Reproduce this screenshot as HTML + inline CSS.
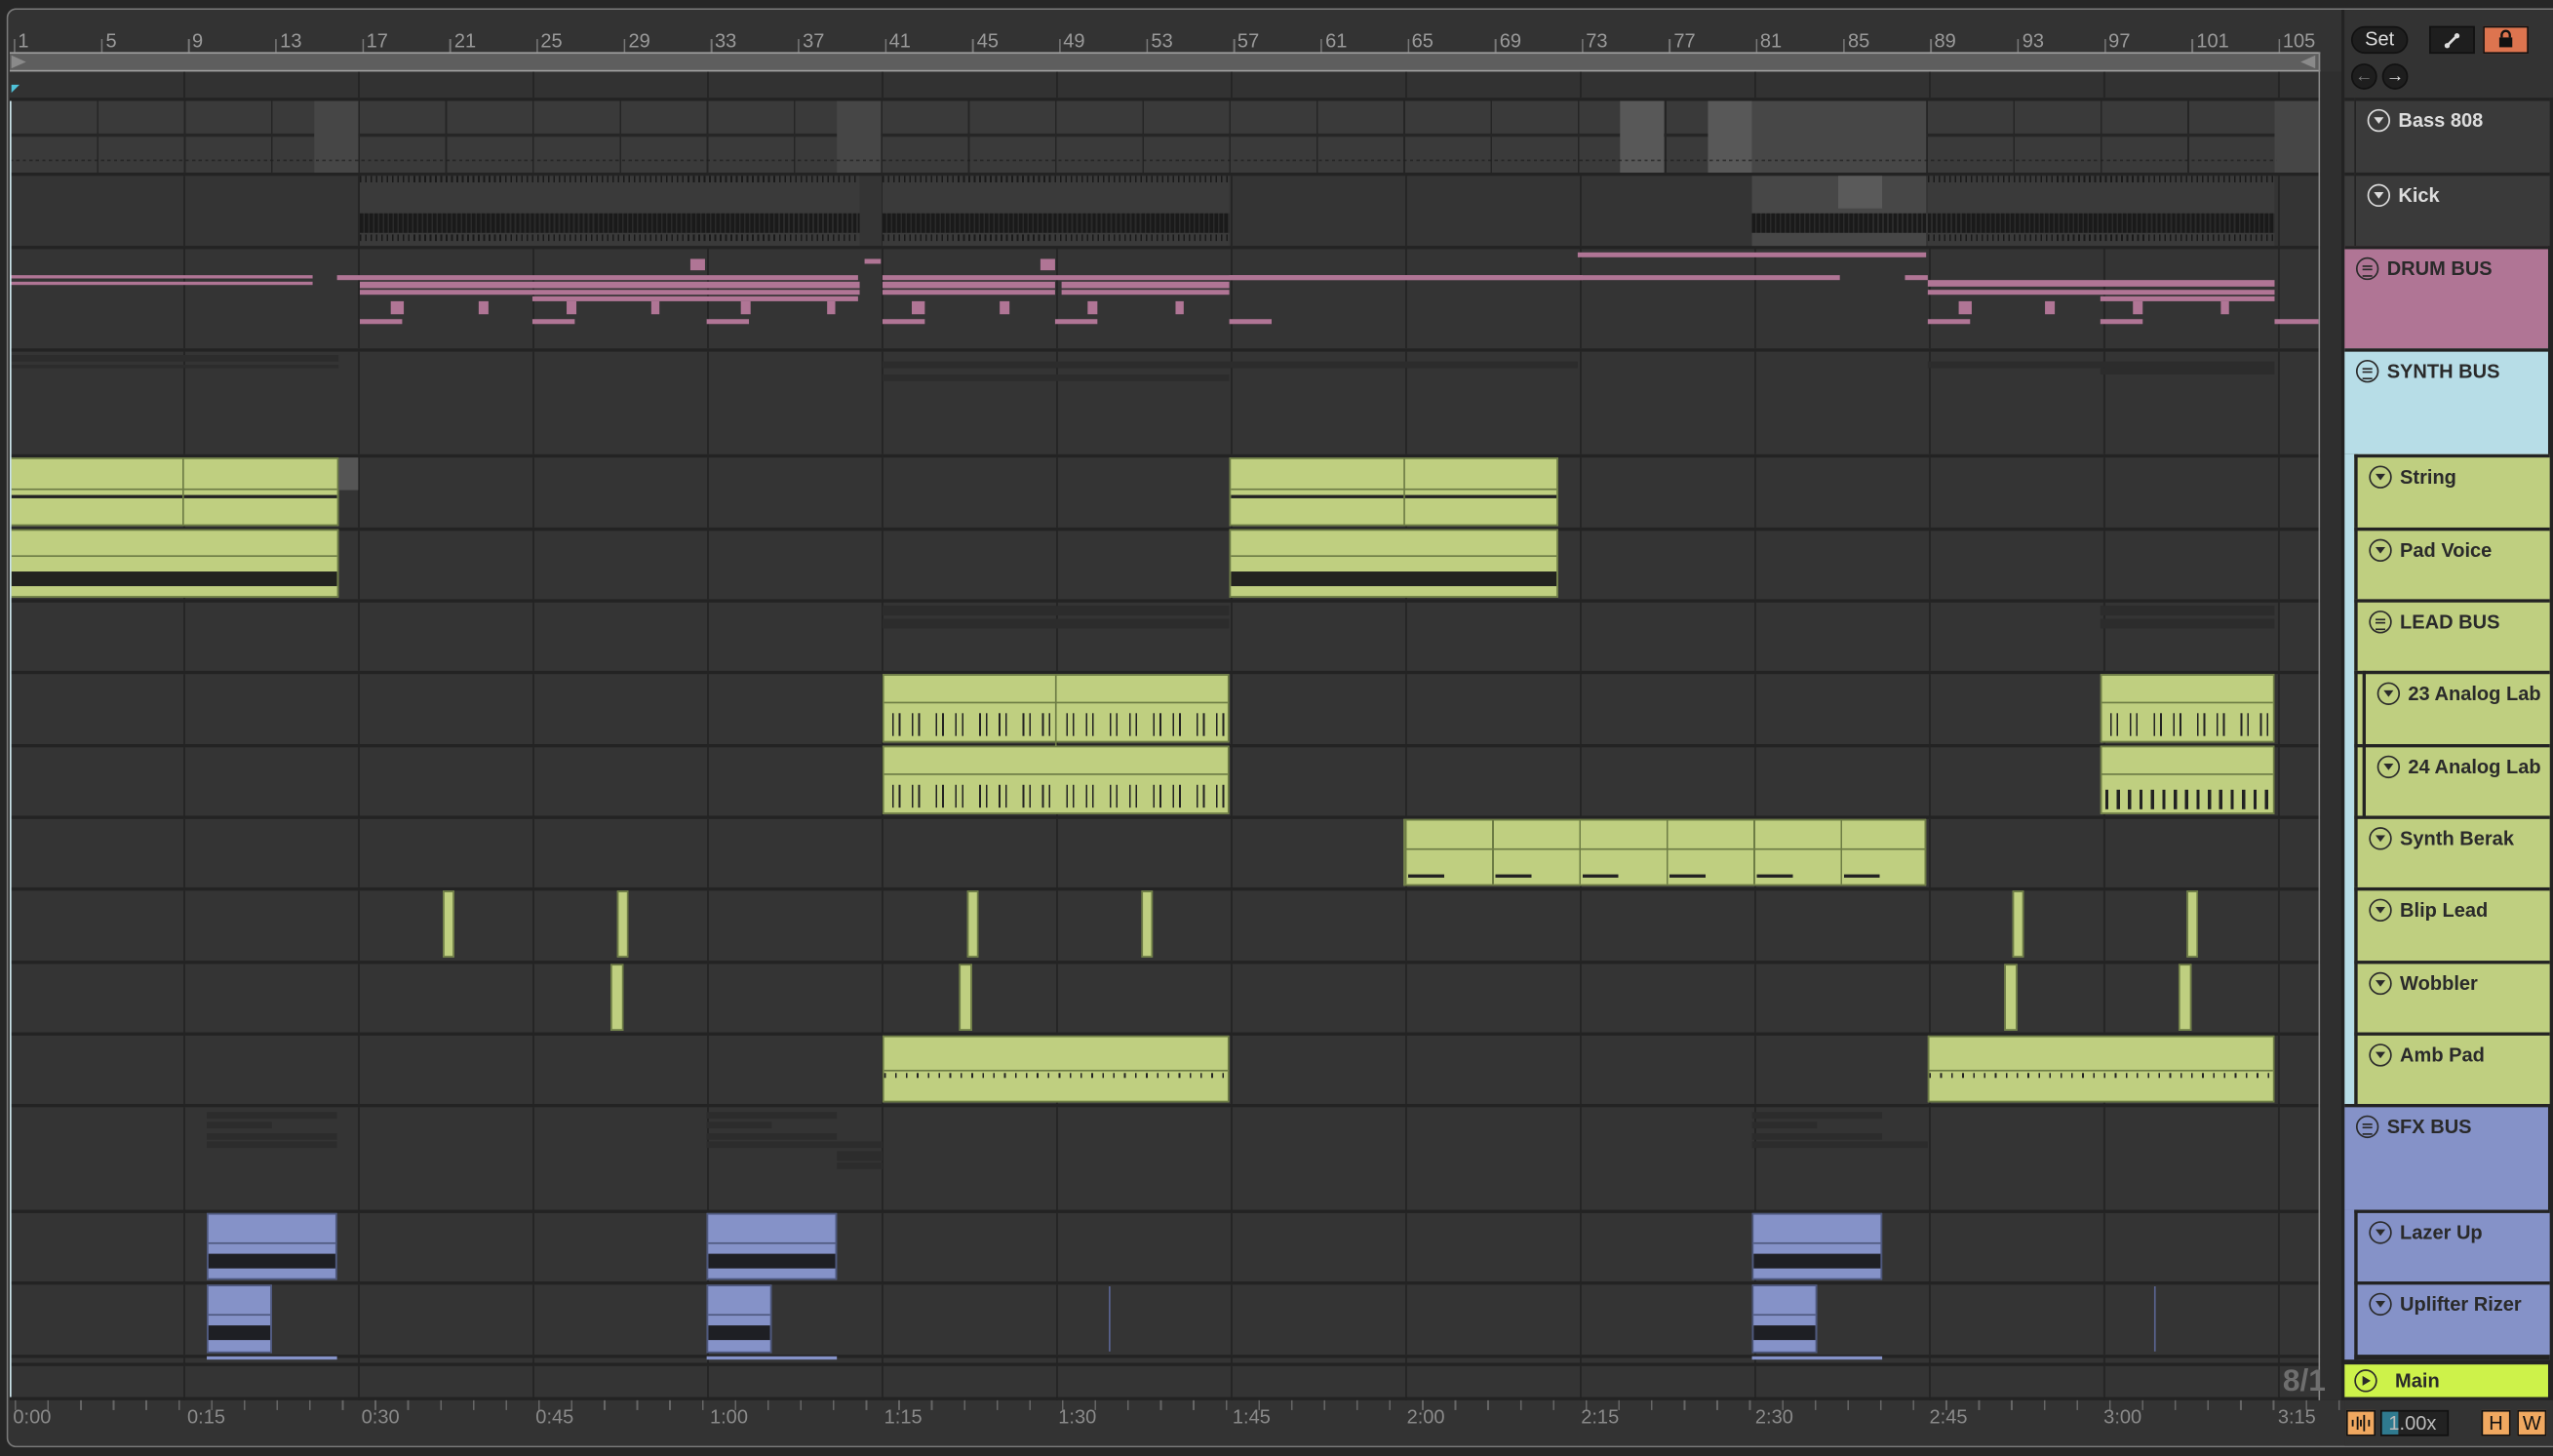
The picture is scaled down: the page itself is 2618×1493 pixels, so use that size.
<!DOCTYPE html>
<html><head><meta charset="utf-8">
<style>
*{margin:0;padding:0;box-sizing:border-box}
html,body{width:2618px;height:1492px;overflow:hidden;background:#252525}
#s{position:absolute;left:0;top:0;width:1568px;height:894px;transform:scale(1.66964);transform-origin:0 0;font-family:"Liberation Sans",sans-serif;background:#262626}
.a{position:absolute}
.lane{position:absolute;left:6px;width:1432px;background:#343434;border-top:2px solid #232323;
 background-image:repeating-linear-gradient(90deg,transparent 0,transparent 106px,#252525 106px,#252525 107.2px);background-position:0.6px 0}
.g{position:absolute;background:#bfcf80;border:1px solid #6d7c45}
.b{position:absolute;background:#8592c8;border:1px solid #4e587e}
.h{position:absolute;left:1440px;width:126px;border-top:2px solid #232323;font-weight:bold;font-size:12px;color:#2a2a2a}
.h span{position:absolute;top:5px;left:26px;white-space:nowrap}
.ic{position:absolute;left:7px;top:5px;width:14px;height:14px;border:1.3px solid #2a2a2a;border-radius:50%}
.ic:after{content:"";position:absolute;left:2.6px;top:4px;border-left:3.5px solid transparent;border-right:3.5px solid transparent;border-top:4.5px solid currentColor}
.ic.bus:after{border:none;left:3px;top:3.5px;width:6px;height:5px;border-top:1.2px solid #2a2a2a;border-bottom:1.2px solid #2a2a2a;background:linear-gradient(#2a2a2a,#2a2a2a) 0 1.9px/100% 1.2px no-repeat}
.rl{position:absolute;top:18px;font-size:12px;color:#9a9a9a}
.tl{position:absolute;top:863px;font-size:12px;color:#8a8a8a}
.pk{position:absolute;background:#b07595;height:3px}
.fd{position:absolute;background:#2c2c2c;height:4px}
</style></head><body><div id="s">
<div class="a" style="left:4px;top:5px;width:1564px;height:884px;border:1.5px solid #7a7a7a;border-right:none;border-radius:6px 0 0 6px;background:#333"></div>
<div class="rl" style="left:11px">1</div><div class="rl" style="left:65px">5</div><div class="rl" style="left:118px">9</div><div class="rl" style="left:172px">13</div><div class="rl" style="left:225px">17</div><div class="rl" style="left:279px">21</div><div class="rl" style="left:332px">25</div><div class="rl" style="left:386px">29</div><div class="rl" style="left:439px">33</div><div class="rl" style="left:493px">37</div><div class="rl" style="left:546px">41</div><div class="rl" style="left:600px">45</div><div class="rl" style="left:653px">49</div><div class="rl" style="left:707px">53</div><div class="rl" style="left:760px">57</div><div class="rl" style="left:814px">61</div><div class="rl" style="left:867px">65</div><div class="rl" style="left:921px">69</div><div class="rl" style="left:974px">73</div><div class="rl" style="left:1028px">77</div><div class="rl" style="left:1081px">81</div><div class="rl" style="left:1135px">85</div><div class="rl" style="left:1188px">89</div><div class="rl" style="left:1242px">93</div><div class="rl" style="left:1295px">97</div><div class="rl" style="left:1349px">101</div><div class="rl" style="left:1402px">105</div>
<div class="a" style="left:6px;top:24px;width:1432px;height:8px;background-image:repeating-linear-gradient(90deg,#777 0,#777 1px,transparent 1px,transparent 53.5px);background-position:2.5px 0"></div>
<div class="a" style="left:6px;top:32px;width:1419px;height:12px;background:#5e5e5e;border-top:1px solid #a0a0a0;border-bottom:1px solid #a0a0a0"></div>
<div class="a" style="left:7px;top:34px;border-left:9px solid #8a8a8a;border-top:4px solid transparent;border-bottom:4px solid transparent"></div>
<div class="a" style="left:1413px;top:34px;border-right:9px solid #8a8a8a;border-top:4px solid transparent;border-bottom:4px solid transparent"></div>
<div class="a" style="left:6px;top:44px;width:1432px;height:16px;background:#323232;background-image:repeating-linear-gradient(90deg,transparent 0,transparent 106px,#252525 106px,#252525 107.2px);background-position:0.6px 0"></div>
<div class="a" style="left:7px;top:52px;border-left:5px solid #4fc1d8;border-bottom:5px solid transparent"></div>
<div class="lane" style="top:60px;height:46px"></div>
<div class="lane" style="top:106px;height:45px"></div>
<div class="lane" style="top:151px;height:63px"></div>
<div class="lane" style="top:214px;height:65px"></div>
<div class="lane" style="top:279px;height:45px"></div>
<div class="lane" style="top:324px;height:44px"></div>
<div class="lane" style="top:368px;height:44px"></div>
<div class="lane" style="top:412px;height:45px"></div>
<div class="lane" style="top:457px;height:44px"></div>
<div class="lane" style="top:501px;height:44px"></div>
<div class="lane" style="top:545px;height:45px"></div>
<div class="lane" style="top:590px;height:44px"></div>
<div class="lane" style="top:634px;height:44px"></div>
<div class="lane" style="top:678px;height:65px"></div>
<div class="lane" style="top:743px;height:44px"></div>
<div class="lane" style="top:787px;height:45px"></div>
<div class="lane" style="top:832px;height:6px"></div>
<div class="lane" style="top:837px;height:23px"></div>
<div class="a" style="left:6px;top:858px;width:1432px;height:2px;background:#232323"></div>
<div class="a" style="left:6px;top:62px;width:1392px;height:44px;background:#3a3a3a;background-image:linear-gradient(#262626,#262626),repeating-linear-gradient(90deg,#252525 0,#252525 1px,transparent 1px,transparent 53.5px);background-size:100% 2px,100% 100%;background-position:0 20px,0 0;background-repeat:no-repeat,repeat"></div>
<div class="a" style="left:193px;top:62px;width:27px;height:44px;background:#464646"></div>
<div class="a" style="left:514px;top:62px;width:27px;height:44px;background:#464646"></div>
<div class="a" style="left:995px;top:62px;width:27px;height:44px;background:#585858"></div>
<div class="a" style="left:1049px;top:62px;width:27px;height:44px;background:#585858"></div>
<div class="a" style="left:1076px;top:62px;width:107px;height:44px;background:#474747"></div>
<div class="a" style="left:1397px;top:62px;width:27px;height:44px;background:#464646"></div>
<div class="a" style="left:6px;top:98px;width:1392px;height:1px;background-image:repeating-linear-gradient(90deg,#1e1e1e 0,#1e1e1e 2px,transparent 2px,transparent 4px);opacity:.7"></div>
<div class="a" style="left:221px;top:108px;width:307px;height:43px;background:#3a3a3a;background-image:repeating-linear-gradient(90deg,#1a1a1a 0,#1a1a1a 1px,transparent 1px,transparent 3.3px);background-size:100% 4px;background-repeat:repeat-x"></div>
<div class="a" style="left:221px;top:131px;width:307px;height:12px;background:repeating-linear-gradient(90deg,#1a1a1a 0,#1a1a1a 2px,#2b2b2b 2px,#2b2b2b 3px)"></div>
<div class="a" style="left:221px;top:144px;width:307px;height:4px;background:repeating-linear-gradient(90deg,#1a1a1a 0,#1a1a1a 1px,transparent 1px,transparent 3.3px)"></div>
<div class="a" style="left:542px;top:108px;width:213px;height:43px;background:#3a3a3a;background-image:repeating-linear-gradient(90deg,#1a1a1a 0,#1a1a1a 1px,transparent 1px,transparent 3.3px);background-size:100% 4px;background-repeat:repeat-x"></div>
<div class="a" style="left:542px;top:131px;width:213px;height:12px;background:repeating-linear-gradient(90deg,#1a1a1a 0,#1a1a1a 2px,#2b2b2b 2px,#2b2b2b 3px)"></div>
<div class="a" style="left:542px;top:144px;width:213px;height:4px;background:repeating-linear-gradient(90deg,#1a1a1a 0,#1a1a1a 1px,transparent 1px,transparent 3.3px)"></div>
<div class="a" style="left:1076px;top:108px;width:107px;height:43px;background:#474747"></div>
<div class="a" style="left:1129px;top:108px;width:27px;height:20px;background:#5a5a5a"></div>
<div class="a" style="left:1076px;top:131px;width:107px;height:12px;background:repeating-linear-gradient(90deg,#1a1a1a 0,#1a1a1a 2px,#2b2b2b 2px,#2b2b2b 3px)"></div>
<div class="a" style="left:1184px;top:108px;width:213px;height:43px;background:#3a3a3a;background-image:repeating-linear-gradient(90deg,#1a1a1a 0,#1a1a1a 1px,transparent 1px,transparent 3.3px);background-size:100% 4px;background-repeat:repeat-x"></div>
<div class="a" style="left:1184px;top:131px;width:213px;height:12px;background:repeating-linear-gradient(90deg,#1a1a1a 0,#1a1a1a 2px,#2b2b2b 2px,#2b2b2b 3px)"></div>
<div class="a" style="left:1184px;top:144px;width:213px;height:4px;background:repeating-linear-gradient(90deg,#1a1a1a 0,#1a1a1a 1px,transparent 1px,transparent 3.3px)"></div>
<div class="pk" style="left:6px;top:169px;width:186px;height:2px"></div><div class="pk" style="left:6px;top:173px;width:186px;height:2px"></div>
<div class="pk" style="left:207px;top:169px;width:320px"></div><div class="pk" style="left:221px;top:173px;width:307px;height:4px"></div><div class="pk" style="left:221px;top:178px;width:307px"></div><div class="pk" style="left:327px;top:182px;width:200px"></div>
<div class="pk" style="left:424px;top:159px;width:9px;height:7px"></div><div class="pk" style="left:531px;top:159px;width:10px"></div><div class="pk" style="left:639px;top:159px;width:9px;height:7px"></div>
<div class="pk" style="left:542px;top:169px;width:430px"></div><div class="pk" style="left:542px;top:173px;width:106px;height:4px"></div><div class="pk" style="left:652px;top:173px;width:103px;height:4px"></div><div class="pk" style="left:542px;top:178px;width:106px"></div><div class="pk" style="left:652px;top:178px;width:103px"></div>
<div class="pk" style="left:755px;top:169px;width:375px"></div><div class="pk" style="left:969px;top:155px;width:214px"></div>
<div class="pk" style="left:1170px;top:169px;width:14px"></div><div class="pk" style="left:1184px;top:172px;width:213px;height:4px"></div><div class="pk" style="left:1184px;top:178px;width:213px"></div><div class="pk" style="left:1290px;top:182px;width:107px"></div>
<div class="pk" style="left:221px;top:196px;width:26px"></div><div class="pk" style="left:327px;top:196px;width:26px"></div><div class="pk" style="left:434px;top:196px;width:26px"></div><div class="pk" style="left:542px;top:196px;width:26px"></div><div class="pk" style="left:648px;top:196px;width:26px"></div><div class="pk" style="left:755px;top:196px;width:26px"></div><div class="pk" style="left:1184px;top:196px;width:26px"></div><div class="pk" style="left:1290px;top:196px;width:26px"></div><div class="pk" style="left:1397px;top:196px;width:27px"></div>
<div class="pk" style="left:240px;top:185px;width:8px;height:8px"></div><div class="pk" style="left:294px;top:185px;width:6px;height:8px"></div><div class="pk" style="left:348px;top:185px;width:6px;height:8px"></div><div class="pk" style="left:400px;top:185px;width:5px;height:8px"></div><div class="pk" style="left:455px;top:185px;width:6px;height:8px"></div><div class="pk" style="left:508px;top:185px;width:5px;height:8px"></div><div class="pk" style="left:560px;top:185px;width:8px;height:8px"></div><div class="pk" style="left:614px;top:185px;width:6px;height:8px"></div><div class="pk" style="left:668px;top:185px;width:6px;height:8px"></div><div class="pk" style="left:722px;top:185px;width:5px;height:8px"></div><div class="pk" style="left:1203px;top:185px;width:8px;height:8px"></div><div class="pk" style="left:1256px;top:185px;width:6px;height:8px"></div><div class="pk" style="left:1310px;top:185px;width:6px;height:8px"></div><div class="pk" style="left:1364px;top:185px;width:5px;height:8px"></div>
<div class="fd" style="left:6px;top:218px;width:202px"></div><div class="fd" style="left:6px;top:224px;width:202px;height:2px"></div>
<div class="fd" style="left:542px;top:222px;width:427px"></div><div class="fd" style="left:542px;top:230px;width:213px"></div><div class="fd" style="left:1290px;top:226px;width:107px"></div><div class="fd" style="left:1184px;top:222px;width:213px"></div>
<div class="g" style="left:6px;top:281px;width:202px;height:42px;background-image:linear-gradient(#6d7c45,#6d7c45),linear-gradient(#222,#222);background-size:100% 1px,100% 2px;background-position:0 18px,0 22px;background-repeat:no-repeat"></div>
<div class="a" style="left:112px;top:281px;width:1px;height:42px;background:#6d7c45"></div>
<div class="a" style="left:208px;top:281px;width:12px;height:20px;background:#555"></div>
<div class="g" style="left:6px;top:325px;width:202px;height:42px;background-image:linear-gradient(#6d7c45,#6d7c45),linear-gradient(#22231f,#22231f);background-size:100% 1px,100% 9px;background-position:0 15px,0 25px;background-repeat:no-repeat"></div>
<div class="g" style="left:755px;top:281px;width:202px;height:42px;background-image:linear-gradient(#6d7c45,#6d7c45),linear-gradient(#222,#222);background-size:100% 1px,100% 2px;background-position:0 18px,0 22px;background-repeat:no-repeat"></div>
<div class="a" style="left:862px;top:281px;width:1px;height:42px;background:#6d7c45"></div>
<div class="g" style="left:755px;top:325px;width:202px;height:42px;background-image:linear-gradient(#6d7c45,#6d7c45),linear-gradient(#22231f,#22231f);background-size:100% 1px,100% 9px;background-position:0 15px,0 25px;background-repeat:no-repeat"></div>
<div class="fd" style="left:542px;top:372px;width:213px;height:6px"></div><div class="fd" style="left:542px;top:380px;width:213px;height:6px"></div>
<div class="fd" style="left:1290px;top:372px;width:107px;height:6px"></div><div class="fd" style="left:1290px;top:380px;width:107px;height:6px"></div>
<div class="g" style="left:542px;top:414px;width:213px;height:42px;background-image:linear-gradient(#6d7c45,#6d7c45),repeating-linear-gradient(90deg,transparent 0,transparent 5px,#222 5px,#222 6px,transparent 6px,transparent 9px,#222 9px,#222 10px,transparent 10px,transparent 17px,#222 17px,#222 18px,transparent 18px,transparent 21px,#222 21px,#222 22px,transparent 22px,transparent 26.7px);background-size:100% 1px,100% 14px;background-position:0 16px,0 23px;background-repeat:no-repeat"></div>
<div class="a" style="left:648px;top:414px;width:1px;height:86px;background:#6d7c45"></div>
<div class="g" style="left:542px;top:458px;width:213px;height:42px;background-image:linear-gradient(#6d7c45,#6d7c45),repeating-linear-gradient(90deg,transparent 0,transparent 5px,#222 5px,#222 6px,transparent 6px,transparent 9px,#222 9px,#222 10px,transparent 10px,transparent 17px,#222 17px,#222 18px,transparent 18px,transparent 21px,#222 21px,#222 22px,transparent 22px,transparent 26.7px);background-size:100% 1px,100% 14px;background-position:0 16px,0 23px;background-repeat:no-repeat"></div>
<div class="g" style="left:1290px;top:414px;width:107px;height:42px;background-image:linear-gradient(#6d7c45,#6d7c45),repeating-linear-gradient(90deg,transparent 0,transparent 5px,#222 5px,#222 6px,transparent 6px,transparent 9px,#222 9px,#222 10px,transparent 10px,transparent 17px,#222 17px,#222 18px,transparent 18px,transparent 21px,#222 21px,#222 22px,transparent 22px,transparent 26.7px);background-size:100% 1px,100% 14px;background-position:0 16px,0 23px;background-repeat:no-repeat"></div>
<div class="g" style="left:1290px;top:458px;width:107px;height:42px;background-image:linear-gradient(#6d7c45,#6d7c45),repeating-linear-gradient(90deg,transparent 0,transparent 2px,#222 2px,#222 4px,transparent 4px,transparent 7px);background-size:100% 1px,100% 12px;background-position:0 16px,0 26px;background-repeat:no-repeat"></div>
<div class="g" style="left:862px;top:503px;width:321px;height:41px;background-image:linear-gradient(#6d7c45,#6d7c45),repeating-linear-gradient(90deg,#6d7c45 0,#6d7c45 1px,transparent 1px,transparent 53.5px),repeating-linear-gradient(90deg,transparent 0,transparent 2px,#222 2px,#222 24px,transparent 24px,transparent 53.5px);background-size:100% 1px,100% 100%,100% 2px;background-position:0 17px,0 0,0 33px;background-repeat:no-repeat"></div>
<div class="g" style="left:272px;top:547px;width:7px;height:41px"></div><div class="g" style="left:379px;top:547px;width:7px;height:41px"></div><div class="g" style="left:594px;top:547px;width:7px;height:41px"></div><div class="g" style="left:701px;top:547px;width:7px;height:41px"></div><div class="g" style="left:1236px;top:547px;width:7px;height:41px"></div><div class="g" style="left:1343px;top:547px;width:7px;height:41px"></div>
<div class="g" style="left:375px;top:592px;width:8px;height:41px"></div><div class="g" style="left:589px;top:592px;width:8px;height:41px"></div><div class="g" style="left:1231px;top:592px;width:8px;height:41px"></div><div class="g" style="left:1338px;top:592px;width:8px;height:41px"></div>
<div class="g" style="left:542px;top:636px;width:213px;height:41px;background-image:linear-gradient(#6d7c45,#6d7c45),repeating-linear-gradient(90deg,#222 0,#222 1px,transparent 1px,transparent 6.7px);background-size:100% 1px,100% 3px;background-position:0 20px,0 22px;background-repeat:no-repeat"></div>
<div class="g" style="left:1184px;top:636px;width:213px;height:41px;background-image:linear-gradient(#6d7c45,#6d7c45),repeating-linear-gradient(90deg,#222 0,#222 1px,transparent 1px,transparent 6.7px);background-size:100% 1px,100% 3px;background-position:0 20px,0 22px;background-repeat:no-repeat"></div>
<div class="fd" style="left:127px;top:683px;width:80px"></div><div class="fd" style="left:127px;top:689px;width:40px"></div><div class="fd" style="left:127px;top:696px;width:80px"></div><div class="fd" style="left:127px;top:701px;width:80px"></div>
<div class="fd" style="left:434px;top:683px;width:80px"></div><div class="fd" style="left:434px;top:689px;width:40px"></div><div class="fd" style="left:434px;top:696px;width:80px"></div><div class="fd" style="left:434px;top:701px;width:108px"></div><div class="fd" style="left:514px;top:707px;width:28px;height:6px"></div><div class="fd" style="left:514px;top:714px;width:28px"></div>
<div class="fd" style="left:1076px;top:683px;width:80px"></div><div class="fd" style="left:1076px;top:689px;width:40px"></div><div class="fd" style="left:1076px;top:696px;width:80px"></div><div class="fd" style="left:1076px;top:701px;width:108px"></div>
<div class="b" style="left:127px;top:745px;width:80px;height:41px;background-image:linear-gradient(#4e587e,#4e587e),linear-gradient(#1e1f24,#1e1f24);background-size:100% 1px,100% 9px;background-position:0 17px,0 24px;background-repeat:no-repeat"></div>
<div class="b" style="left:434px;top:745px;width:80px;height:41px;background-image:linear-gradient(#4e587e,#4e587e),linear-gradient(#1e1f24,#1e1f24);background-size:100% 1px,100% 9px;background-position:0 17px,0 24px;background-repeat:no-repeat"></div>
<div class="b" style="left:1076px;top:745px;width:80px;height:41px;background-image:linear-gradient(#4e587e,#4e587e),linear-gradient(#1e1f24,#1e1f24);background-size:100% 1px,100% 9px;background-position:0 17px,0 24px;background-repeat:no-repeat"></div>
<div class="b" style="left:127px;top:789px;width:40px;height:42px;background-image:linear-gradient(#4e587e,#4e587e),linear-gradient(#1e1f24,#1e1f24);background-size:100% 1px,100% 9px;background-position:0 17px,0 24px;background-repeat:no-repeat"></div>
<div class="b" style="left:434px;top:789px;width:40px;height:42px;background-image:linear-gradient(#4e587e,#4e587e),linear-gradient(#1e1f24,#1e1f24);background-size:100% 1px,100% 9px;background-position:0 17px,0 24px;background-repeat:no-repeat"></div>
<div class="b" style="left:1076px;top:789px;width:40px;height:42px;background-image:linear-gradient(#4e587e,#4e587e),linear-gradient(#1e1f24,#1e1f24);background-size:100% 1px,100% 9px;background-position:0 17px,0 24px;background-repeat:no-repeat"></div>
<div class="a" style="left:127px;top:833px;width:80px;height:2px;background:#8592c8"></div><div class="a" style="left:434px;top:833px;width:80px;height:2px;background:#8592c8"></div><div class="a" style="left:1076px;top:833px;width:80px;height:2px;background:#8592c8"></div>
<div class="a" style="left:681px;top:790px;width:1px;height:40px;background:#5a6490"></div><div class="a" style="left:1323px;top:790px;width:1px;height:40px;background:#5a6490"></div>
<div class="a" style="left:6px;top:62px;width:1px;height:796px;background:#cfe8ee"></div>
<div class="a" style="left:1424px;top:32px;width:1px;height:828px;background:#8a8a8a"></div>
<div class="a" style="left:1425px;top:44px;width:14px;height:816px;background:#2f2f2f"></div>
<div class="a" style="left:1438px;top:6px;width:2px;height:854px;background:#232323"></div>
<div class="a" style="left:1402px;top:838px;font-size:19px;font-weight:bold;color:#6e6e6e">8/1</div>
<div class="a" style="left:6px;top:860px;width:1432px;height:6px;background-image:repeating-linear-gradient(90deg,#666 0,#666 1px,transparent 1px,transparent 20.1px);background-position:3px 0"></div>
<div class="tl" style="left:8px">0:00</div><div class="tl" style="left:115px">0:15</div><div class="tl" style="left:222px">0:30</div><div class="tl" style="left:329px">0:45</div><div class="tl" style="left:436px">1:00</div><div class="tl" style="left:543px">1:15</div><div class="tl" style="left:650px">1:30</div><div class="tl" style="left:757px">1:45</div><div class="tl" style="left:864px">2:00</div><div class="tl" style="left:971px">2:15</div><div class="tl" style="left:1078px">2:30</div><div class="tl" style="left:1185px">2:45</div><div class="tl" style="left:1292px">3:00</div><div class="tl" style="left:1399px">3:15</div>
<div class="a" style="left:1440px;top:6px;width:128px;height:54px;background:#333"></div>
<div class="a" style="left:1444px;top:16px;width:35px;height:17px;border-radius:9px;background:#1e1e1e;border:1px solid #111;color:#ddd;font-size:12px;text-align:center;line-height:15px">Set</div>
<div class="a" style="left:1492px;top:16px;width:28px;height:17px;background:#1e1e1e;border:1px solid #111"><svg width="26" height="15" viewBox="0 0 26 15"><path d="M10 11 L16 5" stroke="#ddd" stroke-width="1.6"/><circle cx="10" cy="11" r="1.6" fill="#ddd"/><circle cx="16" cy="5" r="1.6" fill="#ddd"/></svg></div>
<div class="a" style="left:1525px;top:16px;width:28px;height:17px;background:#dd744f;border:1px solid #111"><svg width="26" height="15" viewBox="0 0 26 15"><rect x="9" y="6" width="8" height="6" fill="#111"/><path d="M10.5 6 V4.5 a2.5 2.5 0 0 1 5 0 V6" fill="none" stroke="#111" stroke-width="1.4"/></svg></div>
<div class="a" style="left:1444px;top:39px;width:16px;height:16px;border-radius:50%;background:#1e1e1e;border:1px solid #111;color:#777;font-size:11px;text-align:center;line-height:14px">&#8592;</div>
<div class="a" style="left:1463px;top:39px;width:16px;height:16px;border-radius:50%;background:#1e1e1e;border:1px solid #111;color:#ddd;font-size:11px;text-align:center;line-height:14px">&#8594;</div>
<div class="a" style="left:1440px;top:60px;width:128px;height:800px;background:#242424"></div>
<div class="h" style="top:60px;height:46px;left:1440px;width:6px;background:#3c3c3c"></div>
<div class="h" style="top:106px;height:45px;left:1440px;width:6px;background:#3c3c3c"></div>
<div class="h" style="top:60px;height:46px;left:1447px;width:119px;background:#3a3a3a;color:#ddd"><div class="ic" style="border-color:#ddd;color:#ddd"></div><span>Bass 808</span></div>
<div class="h" style="top:106px;height:45px;left:1447px;width:119px;background:#3a3a3a;color:#ddd"><div class="ic" style="border-color:#ddd;color:#ddd"></div><span>Kick</span></div>
<div class="h" style="top:151px;height:63px;background:#b07595;width:125px"><div class="ic bus"></div><span>DRUM BUS</span></div>
<div class="h" style="top:214px;height:65px;background:#b7dde7;width:125px"><div class="ic bus"></div><span>SYNTH BUS</span></div>
<div class="a" style="left:1440px;top:279px;width:6px;height:399px;background:#b7dde7"></div>
<div class="h" style="top:279px;height:45px;left:1446px;width:120px;background:#bfcf80;border-left:2px solid #232323"><div class="ic" style="color:#2a2a2a"></div><span>String</span></div>
<div class="h" style="top:324px;height:44px;left:1446px;width:120px;background:#bfcf80;border-left:2px solid #232323"><div class="ic" style="color:#2a2a2a"></div><span>Pad Voice</span></div>
<div class="h" style="top:368px;height:44px;left:1446px;width:120px;background:#bfcf80;border-left:2px solid #232323"><div class="ic bus"></div><span>LEAD BUS</span></div>
<div class="h" style="top:412px;height:45px;left:1446px;width:120px;background:#bfcf80;border-left:2px solid #232323"></div>
<div class="h" style="top:412px;height:45px;left:1451px;width:115px;background:#bfcf80;border-left:2px solid #232323"><div class="ic" style="color:#2a2a2a"></div><span>23 Analog Lab</span></div>
<div class="h" style="top:457px;height:44px;left:1446px;width:120px;background:#bfcf80;border-left:2px solid #232323"></div>
<div class="h" style="top:457px;height:44px;left:1451px;width:115px;background:#bfcf80;border-left:2px solid #232323;border-top:2px solid #232323"><div class="ic" style="color:#2a2a2a"></div><span>24 Analog Lab</span></div>
<div class="h" style="top:501px;height:44px;left:1446px;width:120px;background:#bfcf80;border-left:2px solid #232323"><div class="ic" style="color:#2a2a2a"></div><span>Synth Berak</span></div>
<div class="h" style="top:545px;height:45px;left:1446px;width:120px;background:#bfcf80;border-left:2px solid #232323"><div class="ic" style="color:#2a2a2a"></div><span>Blip Lead</span></div>
<div class="h" style="top:590px;height:44px;left:1446px;width:120px;background:#bfcf80;border-left:2px solid #232323"><div class="ic" style="color:#2a2a2a"></div><span>Wobbler</span></div>
<div class="h" style="top:634px;height:44px;left:1446px;width:120px;background:#bfcf80;border-left:2px solid #232323"><div class="ic" style="color:#2a2a2a"></div><span>Amb Pad</span></div>
<div class="h" style="top:678px;height:65px;background:#8592c8;width:125px"><div class="ic bus"></div><span>SFX BUS</span></div>
<div class="a" style="left:1440px;top:743px;width:6px;height:92px;background:#8592c8"></div>
<div class="h" style="top:743px;height:44px;left:1446px;width:120px;background:#8592c8;border-left:2px solid #232323"><div class="ic" style="color:#2a2a2a"></div><span>Lazer Up</span></div>
<div class="h" style="top:787px;height:48px;left:1446px;width:120px;background:#8592c8;border-left:2px solid #232323;border-bottom:3px solid #232323"><div class="ic" style="color:#2a2a2a"></div><span>Uplifter Rizer</span></div>
<div class="a" style="left:1440px;top:838px;width:125px;height:20px;background:#cdf24a;font-size:12px;font-weight:bold;color:#2a2a2a"><div style="position:absolute;left:6px;top:3px;width:14px;height:14px;border:1.3px solid #2a2a2a;border-radius:50%"><div style="position:absolute;left:4px;top:2.5px;border-left:5px solid #2a2a2a;border-top:3.5px solid transparent;border-bottom:3.5px solid transparent"></div></div><span style="position:absolute;left:31px;top:3px">Main</span></div>
<div class="a" style="left:1440px;top:860px;width:128px;height:28px;background:#333"></div>
<div class="a" style="left:1441px;top:866px;width:18px;height:16px;background:#f0a860;border:1px solid #111"><svg width="16" height="14" viewBox="0 0 16 14"><path d="M3 5v4M6 3v8M8 5v4M10 2v10M13 5v4" stroke="#111" stroke-width="1.1"/></svg></div>
<div class="a" style="left:1462px;top:866px;width:42px;height:16px;background:#222;border:1px solid #111;font-size:12px;color:#bbb;line-height:14px"><div style="position:absolute;left:0;top:0;width:10px;height:14px;background:#2f7a8f"></div><span style="position:absolute;left:4px">1.00x</span></div>
<div class="a" style="left:1524px;top:866px;width:18px;height:16px;background:#f0a860;border:1px solid #111;font-size:12px;text-align:center;line-height:14px;color:#111">H</div>
<div class="a" style="left:1546px;top:866px;width:18px;height:16px;background:#f0a860;border:1px solid #111;font-size:12px;text-align:center;line-height:14px;color:#111">W</div>
</div></body></html>
